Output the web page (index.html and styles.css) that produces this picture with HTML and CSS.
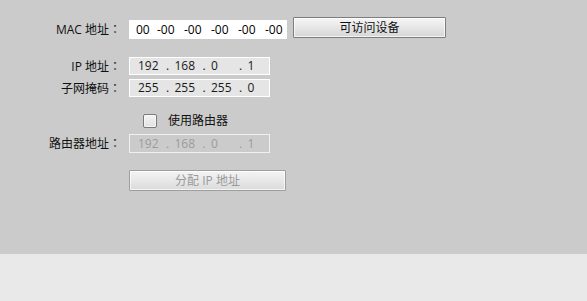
FILE: index.html
```html
<!DOCTYPE html>
<html lang="zh">
<head>
<meta charset="utf-8">
<link rel="stylesheet" href="styles.css">
</head>
<body>
<div class="panel">
  <div class="row row-mac">
    <div class="label">MAC 地址<span class="colon">：</span></div>
    <div class="mac-field">
      <span class="seg first">00</span><span class="seg">-00</span><span class="seg">-00</span><span class="seg">-00</span><span class="seg">-00</span><span class="seg last">-00</span>
    </div>
    <button class="btn btn-devices">可访问设备</button>
  </div>
  <div class="row row-ip">
    <div class="label">IP 地址<span class="colon">：</span></div>
    <div class="ip-field">
      <span class="oct">192</span><span class="dot">.</span><span class="oct">168</span><span class="dot">.</span><span class="oct">0</span><span class="dot">.</span><span class="oct">1</span>
    </div>
  </div>
  <div class="row row-mask">
    <div class="label">子网掩码<span class="colon">：</span></div>
    <div class="ip-field">
      <span class="oct">255</span><span class="dot">.</span><span class="oct">255</span><span class="dot">.</span><span class="oct">255</span><span class="dot">.</span><span class="oct">0</span>
    </div>
  </div>
  <div class="row row-check">
    <div class="label"></div>
    <div class="check-wrap">
      <span class="checkbox"></span>
      <span class="check-text">使用路由器</span>
    </div>
  </div>
  <div class="row row-router">
    <div class="label">路由器地址<span class="colon">：</span></div>
    <div class="ip-field disabled">
      <span class="oct">192</span><span class="dot">.</span><span class="oct">168</span><span class="dot">.</span><span class="oct">0</span><span class="dot">.</span><span class="oct">1</span>
    </div>
  </div>
  <div class="row row-assign">
    <div class="label"></div>
    <button class="btn btn-assign" disabled>分配 IP 地址</button>
  </div>
</div>
<div class="footer"></div>
</body>
</html>
```
FILE: styles.css
```css
html, body {
  margin: 0;
  padding: 0;
  background: #e9e9e9;
  font-family: "Open Sans", "Noto Sans CJK SC", sans-serif;
  font-size: 12px;
  color: #111;
}

.panel {
  background: #cbcbcb;
  height: 254px;
  box-sizing: border-box;
  padding-top: 17px;
  display: flex;
  flex-direction: column;
}

.row {
  display: flex;
  align-items: center;
  gap: 8px;
}

.label {
  width: 121px;
  flex: none;
  text-align: right;
  line-height: 16px;
  white-space: nowrap;
  color: #111;
}
.colon {
  display: inline-block;
  width: 12px;
  text-align: center;
  font-family: "Noto Sans CJK TC", "Noto Sans CJK JP", sans-serif;
  color: #1c2a3a;
}

.row-mac {
  align-items: flex-start;
  height: 22px;
}
.row-mac .label {
  margin-top: 4px;
}

.mac-field {
  margin-top: 3px;
  width: 158px;
  height: 19px;
  box-sizing: border-box;
  background: #ffffff;
  padding-left: 7px;
  display: flex;
  align-items: center;
  white-space: nowrap;
  overflow: hidden;
  color: #000;
  line-height: 16px;
}
.seg {
  display: inline-block;
  width: 27px;
  flex: none;
}
.seg.first {
  width: 21px;
}
.seg.last {
  width: auto;
}

.btn {
  font-family: inherit;
  font-size: 12px;
  margin: 0;
  padding: 0;
  height: 21px;
  box-sizing: border-box;
  border: 1px solid #7d7d7d;
  border-radius: 1px;
  background: linear-gradient(#f6f6f6, #e6e6e6 50%, #d6d6d6);
  box-shadow: inset 0 0 0 1px rgba(255,255,255,0.7);
  color: #111;
  line-height: 17px;
}
.btn-devices {
  width: 153px;
  margin-left: -2px;
}

.row-ip {
  margin-top: 18px;
}
.row-mask {
  margin-top: 4px;
}

.ip-field {
  width: 141px;
  height: 18px;
  box-sizing: border-box;
  border: 1px solid #ffffff;
  background: #e5e5e5;
  padding-left: 8px;
  display: flex;
  align-items: center;
  white-space: nowrap;
  color: #1a1a1a;
  line-height: 16px;
}
.ip-field.disabled {
  height: 19px;
  background: #cbcbcb;
  border-color: #f0f0f0;
  color: #9c9c9c;
}
.oct {
  display: inline-block;
  width: 28px;
  flex: none;
}
.dot {
  display: inline-block;
  width: 8.5px;
  flex: none;
}

.row-check {
  margin-top: 17px;
  height: 14px;
}
.check-wrap {
  display: flex;
  align-items: center;
  margin-left: 14px;
  gap: 11px;
}
.checkbox {
  width: 14px;
  height: 14px;
  box-sizing: border-box;
  border: 1px solid #7a7a7a;
  border-radius: 2px;
  background: linear-gradient(#f4f4f4, #e2e2e2);
  box-shadow: inset 0 0 0 1px rgba(255,255,255,0.6);
}
.check-text {
  line-height: 16px;
  color: #111;
}

.row-router {
  margin-top: 6px;
}

.row-assign {
  margin-top: 17px;
}
.btn-assign {
  width: 157px;
  border-color: #9e9e9e;
  background: linear-gradient(#f4f4f4, #e8e8e8 50%, #dadada);
  color: #9a9a9a;
}

.footer {
  height: 47px;
  background: #e9e9e9;
}
```
